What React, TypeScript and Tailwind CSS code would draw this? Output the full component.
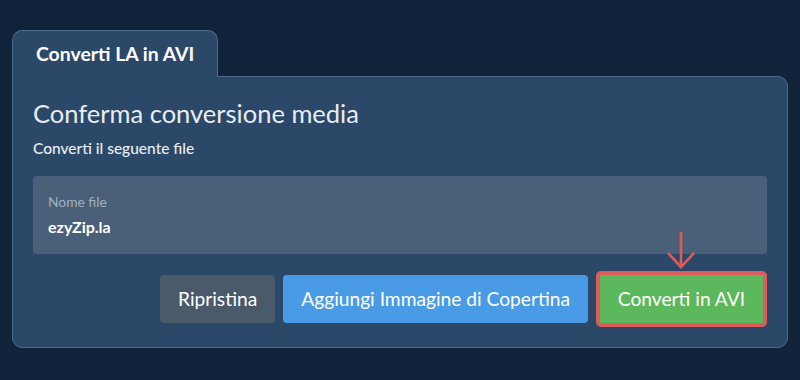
import React from 'react';

export default function App() {
  return (
    <div className="min-h-[380px] w-[800px] bg-[#10233a] pt-[30px] pl-[12px]" style={{ fontFamily: 'Lato, "Noto Sans", sans-serif' }}>
      <div className="w-[776px]">
        {/* Tab */}
        <div className="relative z-10 -mb-px inline-flex h-[47px] items-center rounded-t-[10px] border border-b-0 border-[#4e6a8a] bg-[#2c4868] px-[23px]">
          <span className="text-[19.4px] font-bold text-white">Converti LA in AVI</span>
        </div>

        {/* Card */}
        <div className="rounded-b-[10px] rounded-tr-[10px] border border-[#4e6a8a] bg-[#2c4868] px-[20px] pt-[20px] pb-[20px]">
          <h2 className="text-[25.5px] leading-[32px] font-normal text-[#e8edf3]">Conferma conversione media</h2>
          <p className="mt-[9px] text-[15.5px] leading-[20px] font-medium text-[#e8edf3]">Converti il seguente file</p>

          <div className="mt-[18px] h-[78px] rounded-[4px] bg-[#4a5f78] px-[15px] pt-[18px]">
            <div className="text-[13.8px] leading-[16px] text-[#a3b0bf]">Nome file</div>
            <div className="mt-[7px] text-[16px] leading-[20px] font-bold text-white">ezyZip.la</div>
          </div>

          <div className="mt-[17px] flex items-center justify-end gap-[8px]">
            <button className="h-[48px] rounded-[4px] bg-[#4a5a6b] px-[18px] text-[19.2px] text-white">Ripristina</button>
            <button className="h-[48px] rounded-[4px] bg-[#4a9be6] px-[18px] text-[19.2px] text-white">Aggiungi Immagine di Copertina</button>
            <div className="relative">
              <svg className="absolute left-[71px] top-[-39px]" width="28" height="37" viewBox="0 0 28 37" fill="none">
                <path d="M14 0 V35" stroke="#dd5c5a" strokeWidth="2.6" />
                <path d="M1 21 L14 35 L27 21" stroke="#dd5c5a" strokeWidth="2.6" />
              </svg>
              <div className="rounded-[5px] border-[4px] border-[#dd5c5a]">
                <button className="h-[48px] w-[163px] bg-[#5cb85c] text-[19.2px] text-white">Converti in AVI</button>
              </div>
            </div>
          </div>
        </div>
      </div>
    </div>
  );
}
